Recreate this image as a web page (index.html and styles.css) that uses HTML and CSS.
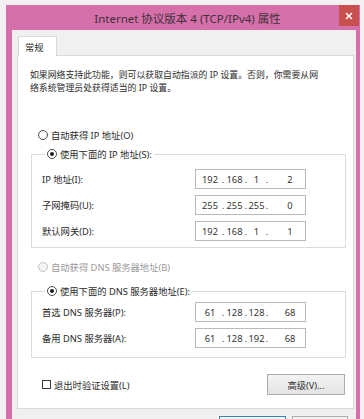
FILE: index.html
```html
<!DOCTYPE html>
<html lang="zh-CN">
<head>
<meta charset="utf-8">
<title>Internet 协议版本 4 (TCP/IPv4) 属性</title>
<link rel="stylesheet" href="styles.css">
</head>
<body>
<div class="window">
  <div class="titlebar">
    <span class="title">Internet 协议版本 4 (TCP/IPv4) 属性</span>
    <div class="close">
      <svg width="8" height="8" viewBox="0 0 8 8"><path d="M1 1L7 7M7 1L1 7" stroke="#fff" stroke-width="1.5" fill="none"/></svg>
    </div>
  </div>
  <div class="client">
    <div class="tabs"><div class="tab">常规</div></div>
    <div class="panel">
      <p class="desc">如果网络支持此功能，则可以获取自动指派的 IP 设置。否则，你需要从网<br>络系统管理员处获得适当的 IP 设置。</p>

      <div class="radio r1"><span class="rb"></span><span>自动获得 IP 地址(O)</span></div>

      <fieldset class="group g1">
        <legend class="radio"><span class="rb checked"></span><span>使用下面的 IP 地址(S):</span></legend>
        <div class="row"><span class="lbl">IP 地址(I):</span>
          <div class="ip"><span class="o1">192</span><span class="dot">.</span><span class="o2">168</span><span class="dot">.</span><span class="o3">1</span><span class="dot">.</span><span class="o4">2</span></div></div>
        <div class="row"><span class="lbl">子网掩码(U):</span>
          <div class="ip"><span class="o1">255</span><span class="dot">.</span><span class="o2">255</span><span class="dot">.</span><span class="o3">255</span><span class="dot">.</span><span class="o4">0</span></div></div>
        <div class="row"><span class="lbl">默认网关(D):</span>
          <div class="ip"><span class="o1">192</span><span class="dot">.</span><span class="o2">168</span><span class="dot">.</span><span class="o3">1</span><span class="dot">.</span><span class="o4">1</span></div></div>
      </fieldset>

      <div class="radio r3 disabled"><span class="rb"></span><span>自动获得 DNS 服务器地址(B)</span></div>

      <fieldset class="group g2">
        <legend class="radio"><span class="rb checked"></span><span>使用下面的 DNS 服务器地址(E):</span></legend>
        <div class="row"><span class="lbl">首选 DNS 服务器(P):</span>
          <div class="ip"><span class="o1">61</span><span class="dot">.</span><span class="o2">128</span><span class="dot">.</span><span class="o3">128</span><span class="dot">.</span><span class="o4">68</span></div></div>
        <div class="row"><span class="lbl">备用 DNS 服务器(A):</span>
          <div class="ip"><span class="o1">61</span><span class="dot">.</span><span class="o2">128</span><span class="dot">.</span><span class="o3">192</span><span class="dot">.</span><span class="o4">68</span></div></div>
      </fieldset>

      <div class="bottom">
        <div class="check"><span class="cb"></span><span>退出时验证设置(L)</span></div>
        <div class="btn adv">高级(V)...</div>
      </div>
    </div>
    <div class="footer">
      <div class="btn ok" aria-label="确定"></div>
      <div class="btn cancel" aria-label="取消"></div>
    </div>
  </div>
</div>
</body>
</html>
```
FILE: styles.css
```css
html, body {
  margin: 0;
  padding: 0;
}
body {
  width: 364px;
  height: 419px;
  overflow: hidden;
  background: #f4f1f3;
  font-family: "Noto Sans", "Noto Sans CJK SC", sans-serif;
  font-size: 9.3px;
  color: #2b2b2b;
}
.window {
  margin: 5px 0 0 6px;
  width: 354px;
  height: 430px;
  background: #d670aa;
  display: flex;
  flex-direction: column;
}
.titlebar {
  height: 25px;
  flex: none;
  position: relative;
  display: flex;
  align-items: center;
  justify-content: center;
  padding-left: 9px;
  font-size: 11.5px;
  color: #3d3038;
}
.close {
  position: absolute;
  top: 0;
  right: 1px;
  width: 20px;
  height: 21px;
  background: #c8504f;
  display: flex;
  align-items: center;
  justify-content: center;
}
.client {
  flex: 1;
  margin: 0 4px 0 6px;
  background: #f0f0f0;
  padding: 6px 2px 0 5px;
}
.tabs {
  display: flex;
}
.tab {
  position: relative;
  z-index: 1;
  margin-left: 1px;
  margin-bottom: -1px;
  width: 39px;
  height: 20px;
  box-sizing: border-box;
  border: 1px solid #d9d9d9;
  border-bottom: none;
  background: #fff;
  display: flex;
  align-items: center;
  padding-left: 6px;
}
.panel {
  background: #fff;
  border: 1px solid #d9d9d9;
  height: 354px;
  box-sizing: border-box;
  padding: 12px 7px 0 12px;
}
.desc {
  margin: 0;
  line-height: 13px;
  font-size: 8.9px;
  white-space: nowrap;
}
.radio {
  display: flex;
  align-items: center;
  height: 16px;
  white-space: nowrap;
}
.r1 {
  margin-top: 33px;
  padding-left: 8px;
}
.rb {
  width: 10px;
  height: 10px;
  box-sizing: border-box;
  border: 1px solid #4a4a4a;
  border-radius: 50%;
  background: #fff;
  margin-right: 3px;
  display: flex;
  align-items: center;
  justify-content: center;
}
.rb.checked::after {
  content: "";
  width: 4px;
  height: 4px;
  border-radius: 50%;
  background: #1e1e1e;
}
.disabled {
  color: #9a9a9a;
}
.disabled .rb {
  border-color: #c2c2c2;
  background: #f4f4f4;
}
.group {
  margin: 3px 0 0 1px;
  border: 1px solid #dcdcdc;
  padding: 7px 0 6px 10px;
  min-width: 0;
}
.group legend {
  margin-left: 3px;
  padding: 0 2px;
}
.g2 {
  margin-top: 8px;
  padding-top: 3px;
  padding-bottom: 9px;
}
.row {
  display: flex;
  align-items: center;
  height: 20px;
  margin-bottom: 6px;
}
.row:last-child {
  margin-bottom: 0;
}
.lbl {
  width: 153px;
  white-space: nowrap;
}
.ip {
  width: 111px;
  height: 20px;
  box-sizing: border-box;
  border: 1px solid #b9b9b9;
  display: flex;
  align-items: center;
  padding-left: 3px;
  font-size: 9.3px;
  color: #333;
}
.ip span {
  text-align: center;
}
.o1 { width: 22px; }
.o2 { width: 19px; }
.o3 { width: 17px; }
.o4 { width: 26px; margin-left: 8px; }
.dot { width: 4px; }
.r3 {
  margin-top: 11px;
  padding-left: 8px;
}
.bottom {
  margin: 16px 1px 0 0;
  display: flex;
  align-items: center;
  justify-content: space-between;
}
.check {
  display: flex;
  align-items: center;
  padding-left: 12px;
}
.cb {
  width: 9px;
  height: 9px;
  box-sizing: border-box;
  border: 1px solid #3a3a3a;
  background: #fff;
  margin-right: 3px;
}
.btn {
  height: 21px;
  box-sizing: border-box;
  border: 1px solid #adadad;
  background: linear-gradient(#f3f3f3, #e4e4e4);
  display: flex;
  align-items: center;
  justify-content: center;
  color: #333;
}
.adv {
  width: 78px;
}
.footer {
  display: flex;
  justify-content: flex-end;
  gap: 6px;
  margin: 7px 6px 0 0;
}
.ok {
  width: 67px;
  border-color: #3c7fb1;
  background: linear-gradient(#eef5fb, #dcebf7);
}
.cancel {
  width: 56px;
}
```
